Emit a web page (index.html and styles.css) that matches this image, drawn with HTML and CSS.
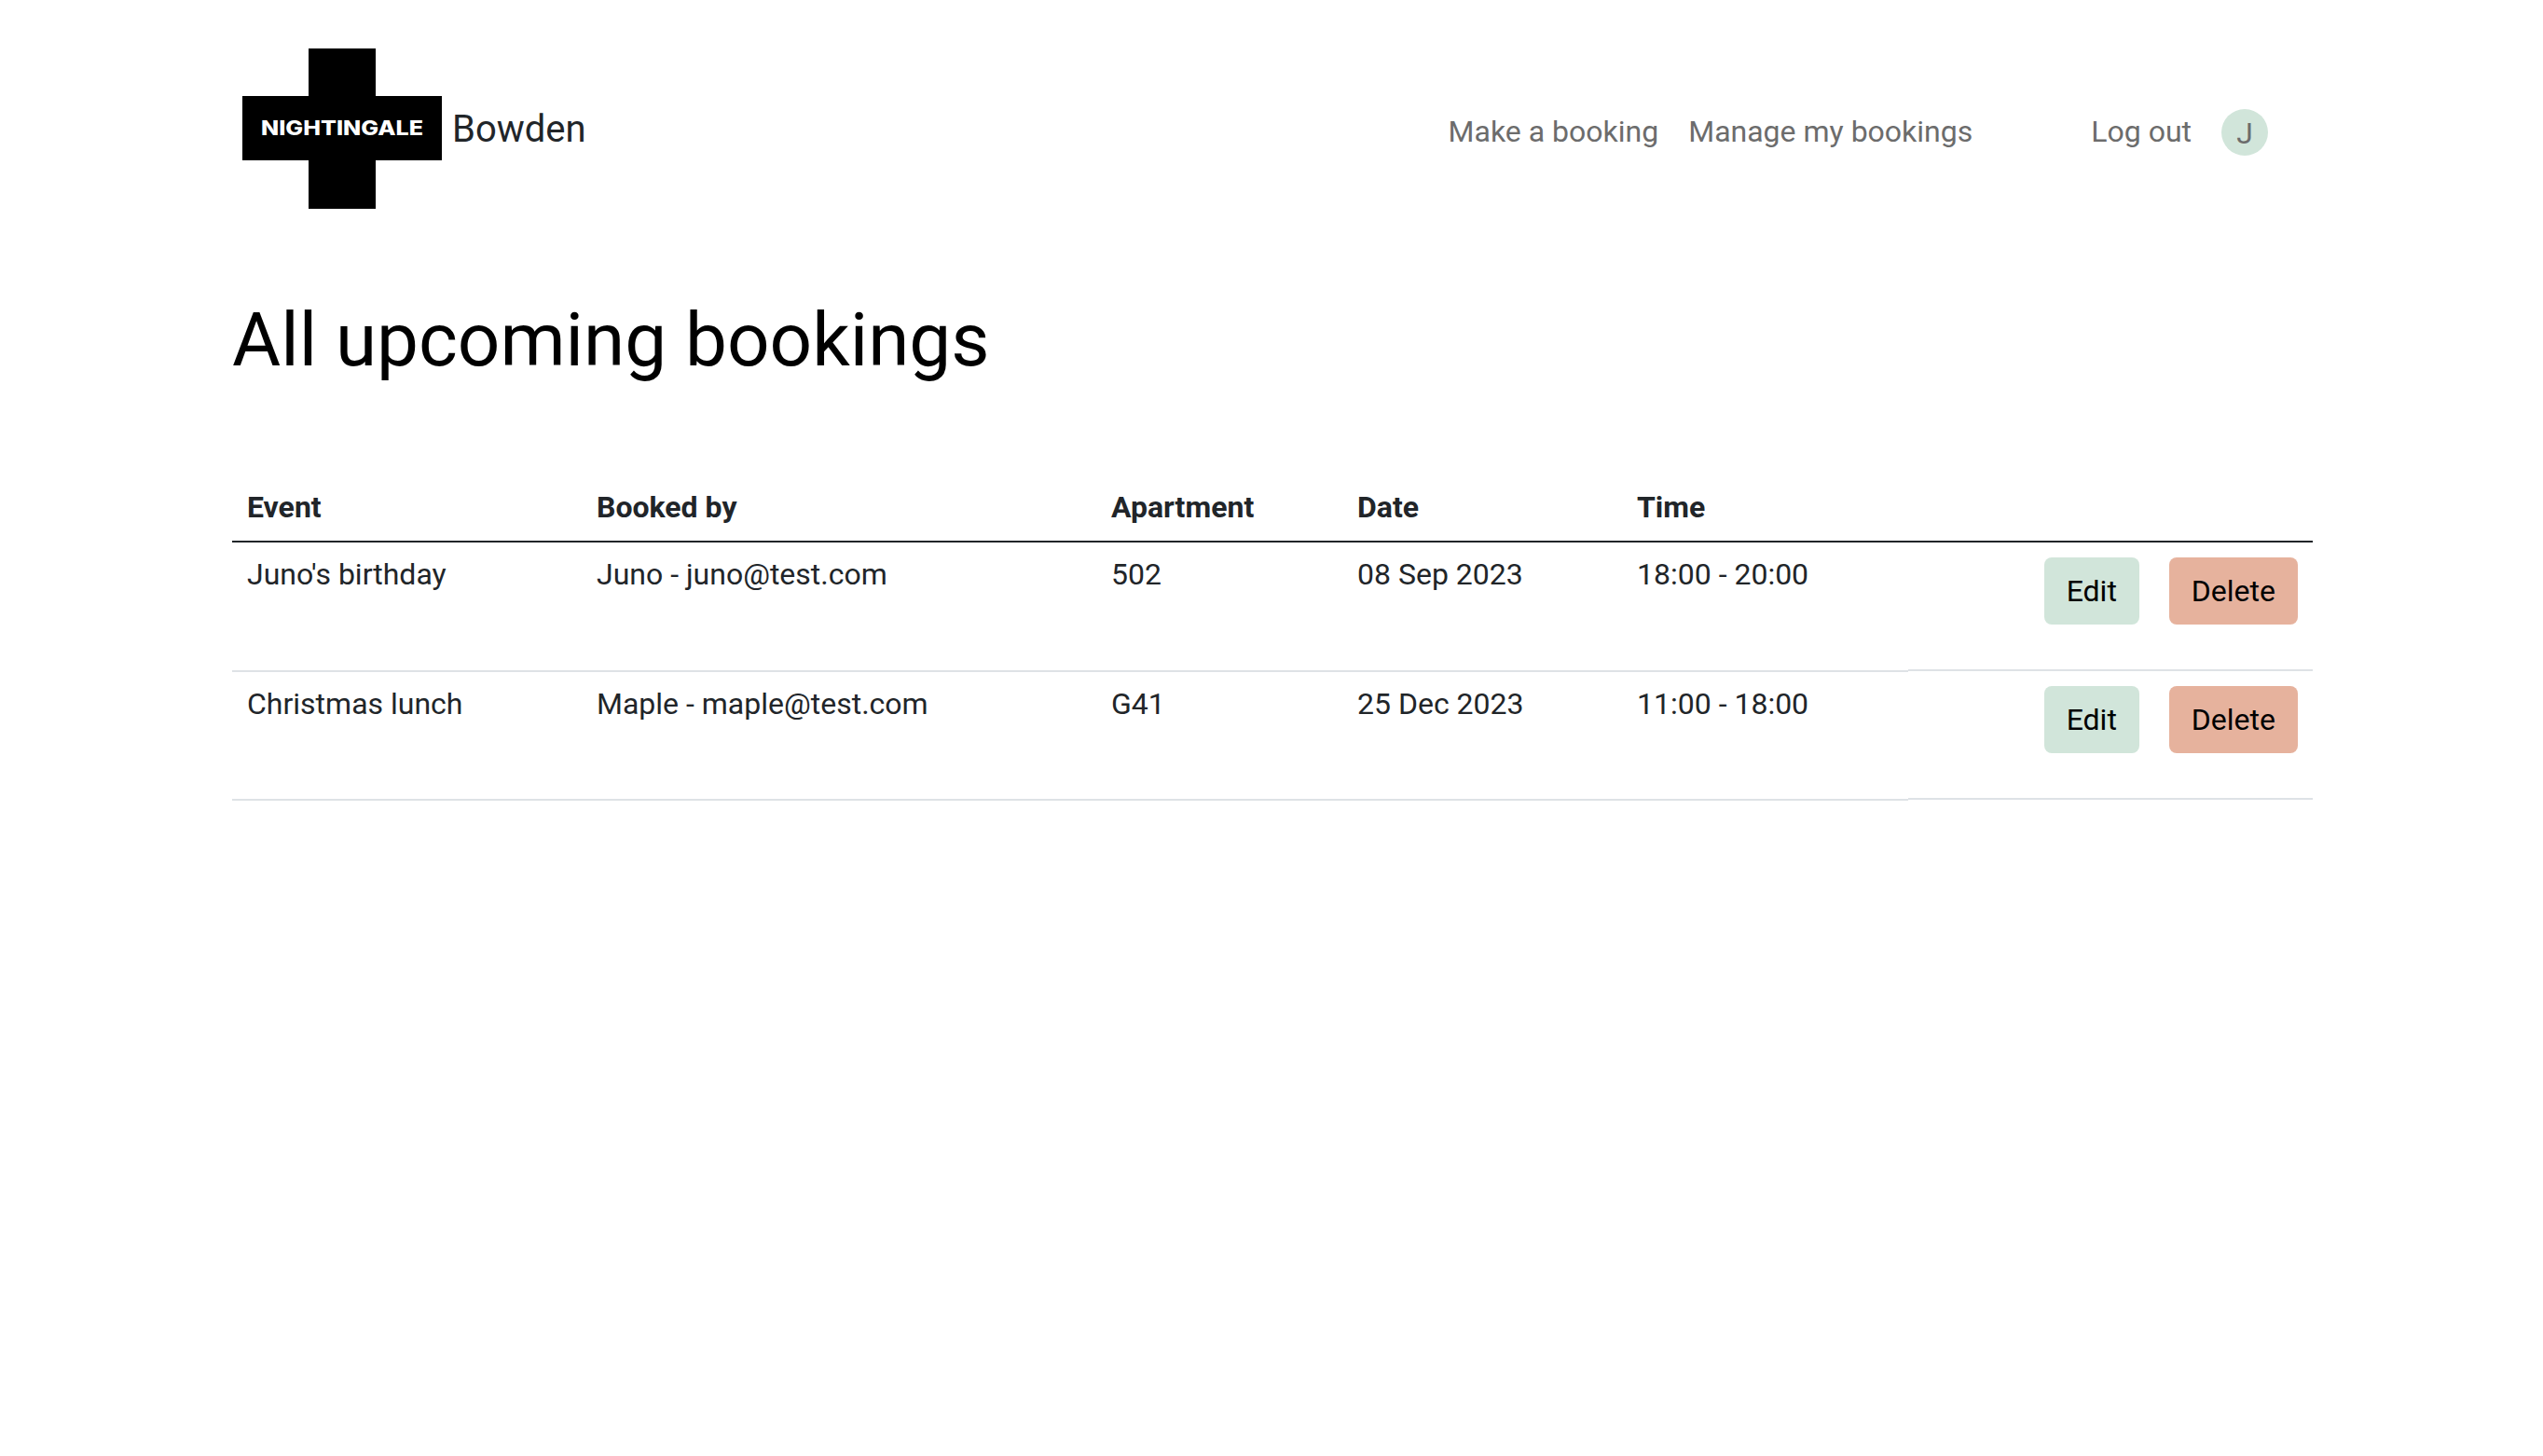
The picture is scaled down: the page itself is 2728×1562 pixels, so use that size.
FILE: index.html
```html
<!DOCTYPE html>
<html lang="en">
<head>
    <meta charset="UTF-8">
    <meta name="viewport" content="width=device-width, initial-scale=1.0">
    <title>All upcoming bookings</title>
    <link rel="stylesheet" href="styles.css">
</head>
<body>
    <div class="container">
        <header class="site-header">
            <a class="brand" href="#">
                <svg class="brand-logo" width="214" height="172" viewBox="0 0 214 172">
                    <path d="M71 0h72v51h71v69h-71v52H71v-52H0V51h71z" fill="#000"/>
                    <text x="107" y="93" text-anchor="middle" textLength="174" lengthAdjust="spacingAndGlyphs" class="brand-logo-text">NIGHTINGALE</text>
                </svg>
                <span class="brand-name">Bowden</span>
            </a>
            <nav class="site-nav">
                <a href="#">Make a booking</a>
                <a href="#">Manage my bookings</a>
                <a href="#" class="logout">Log out</a>
                <span class="avatar">J</span>
            </nav>
        </header>

        <h1>All upcoming bookings</h1>

        <table class="bookings">
            <colgroup>
                <col class="col-event">
                <col class="col-by">
                <col class="col-apartment">
                <col class="col-date">
                <col class="col-time">
                <col>
            </colgroup>
            <thead>
                <tr>
                    <th>Event</th>
                    <th>Booked by</th>
                    <th>Apartment</th>
                    <th>Date</th>
                    <th>Time</th>
                    <th></th>
                </tr>
            </thead>
            <tbody>
                <tr>
                    <td>Juno's birthday</td>
                    <td>Juno - juno@test.com</td>
                    <td>502</td>
                    <td>08 Sep 2023</td>
                    <td>18:00 - 20:00</td>
                    <td class="actions">
                        <div class="action-btns">
                            <button type="button" class="btn edit-btn">Edit</button>
                            <button type="button" class="btn delete-btn">Delete</button>
                        </div>
                    </td>
                </tr>
                <tr>
                    <td>Christmas lunch</td>
                    <td>Maple - maple@test.com</td>
                    <td>G41</td>
                    <td>25 Dec 2023</td>
                    <td>11:00 - 18:00</td>
                    <td class="actions">
                        <div class="action-btns">
                            <button type="button" class="btn edit-btn">Edit</button>
                            <button type="button" class="btn delete-btn">Delete</button>
                        </div>
                    </td>
                </tr>
            </tbody>
        </table>
    </div>
</body>
</html>
```
FILE: styles.css
```css
body {
    font-family: Roboto, Arial, sans-serif;
    font-size: 32px;
    line-height: 48px;
    color: #212529;
    background-color: #fff;
    margin: 0;
}
.container {
    width: 2232px;
    margin-left: 249px;
}
.site-header {
    display: flex;
    align-items: center;
    justify-content: space-between;
    padding: 52px 48px 0 11px;
}
.brand {
    display: flex;
    align-items: center;
    gap: 11px;
    color: #212529;
    text-decoration: none;
}
.brand-logo {
    display: block;
}
.brand-logo-text {
    font-family: Inter, Arial, sans-serif;
    font-weight: 800;
    font-size: 21px;
    fill: #fff;
}
.brand-name {
    font-size: 40px;
    line-height: 48px;
    margin-top: 2px;
}
.site-nav {
    display: flex;
    align-items: center;
    margin-top: 8px;
}
.site-nav a {
    color: #6c6c6c;
    text-decoration: none;
    margin-right: 32px;
    padding-bottom: 2px;
}
.site-nav .logout {
    margin-left: 95px;
}
.avatar {
    width: 50px;
    height: 50px;
    border-radius: 50%;
    background-color: #d1e5da;
    color: #6c6c6c;
    text-align: center;
    line-height: 52px;
}
h1 {
    font-size: 80px;
    font-weight: 400;
    line-height: 96px;
    color: #000;
    margin: 93px 0 0;
}
.bookings {
    width: 100%;
    margin-top: 92px;
    table-layout: fixed;
    border-collapse: separate;
    border-spacing: 0;
}
.col-event { width: 375px; }
.col-by { width: 552px; }
.col-apartment { width: 264px; }
.col-date { width: 300px; }
.col-time { width: 307px; }
.bookings th {
    text-align: left;
    padding: 15px 16px 12px;
    border-bottom: 2px solid #212529;
}
.bookings td {
    vertical-align: top;
    padding: 10px 16px 16px;
    height: 138px;
    box-sizing: border-box;
    border-bottom: 2px solid #dee2e6;
}
.bookings tbody tr:first-child td {
    height: 139px;
}
/* last column's rule sits 1px above the rest of the row */
.bookings .actions {
    padding-top: 15px;
    border-bottom: 0;
    background: linear-gradient(#dee2e6, #dee2e6) left 0 bottom 1px / 100% 2px no-repeat;
}
.bookings tbody tr:first-child .actions {
    padding-top: 16px;
}
.action-btns {
    display: flex;
    justify-content: flex-end;
    gap: 32px;
}
.btn {
    font-family: Roboto, Arial, sans-serif;
    font-size: 32px;
    line-height: 48px;
    padding: 12px 24px;
    border: 0;
    border-radius: 8px;
    color: #000;
    cursor: pointer;
}
.edit-btn {
    background-color: #d1e5da;
}
.delete-btn {
    background-color: #e6b29d;
}
```
